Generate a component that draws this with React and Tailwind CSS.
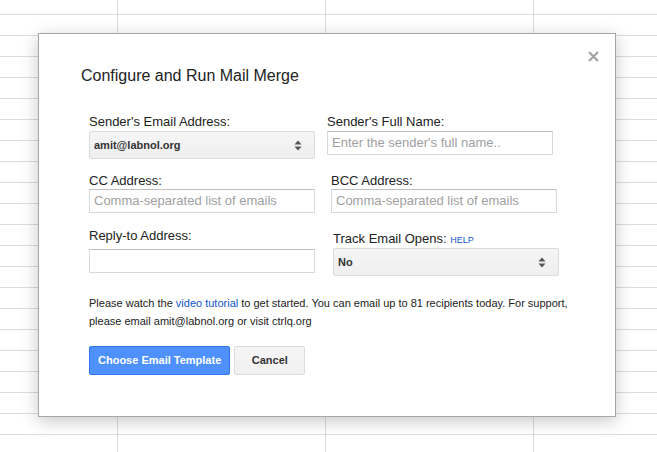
import React from "react";

const font = { fontFamily: '"Liberation Sans", Arial, sans-serif' };

function Arrows() {
  return (
    <svg width="8" height="11" viewBox="0 0 8 11" className="shrink-0">
      <path d="M4 0.5 L7.5 4.5 L0.5 4.5 Z" fill="#555" />
      <path d="M4 10.5 L7.5 6.5 L0.5 6.5 Z" fill="#555" />
    </svg>
  );
}

function Select({ value }) {
  return (
    <div className="mt-[2px] flex h-[28px] w-[226px] items-center justify-between rounded-[2px] border border-[#dcdcdc] bg-gradient-to-b from-[#f5f5f5] to-[#efefef] pl-[4px] pr-[12px] text-[11px] font-bold text-[#333]">
      <span>{value}</span>
      <Arrows />
    </div>
  );
}

function Input({ placeholder }) {
  return (
    <div className="flex h-[24px] w-[226px] items-center border border-[#d9d9d9] border-t-[#c0c0c0] bg-white pl-[4px] text-[13px] text-[#a0a0a0]">
      {placeholder}
    </div>
  );
}

function Label({ children }) {
  return <div className="h-[15px] text-[13px] leading-[15px] text-[#222]">{children}</div>;
}

export default function App() {
  return (
    <div
      className="h-[452px] w-[657px] overflow-hidden bg-white bg-[linear-gradient(to_right,#dcdcdc_1px,transparent_1px),linear-gradient(to_bottom,#dcdcdc_1px,transparent_1px)] bg-[size:208px_21px] bg-[position:117px_14px] pl-[38px] pt-[33px]"
      style={font}
    >
      <div className="relative h-[384px] w-[578px] border border-[#a6a6a6] bg-white pl-[42px] pt-[32px] shadow-[0_4px_16px_rgba(0,0,0,0.22)]">
        {/* close */}
        <svg
          width="11"
          height="11"
          viewBox="0 0 11 11"
          className="absolute right-[16px] top-[17px]"
        >
          <path d="M1 1 L10 10 M10 1 L1 10" stroke="#a3a3a3" strokeWidth="2.2" />
        </svg>

        <div className="h-[20px] text-[16px] leading-[20px] text-[#222]">
          Configure and Run Mail Merge
        </div>

        <div className="ml-[8px] mt-[28px]">
          <div className="flex items-start gap-[12px]">
            <div>
              <Label>Sender's Email Address:</Label>
              <Select value="amit@labnol.org" />
            </div>
            <div>
              <Label>Sender's Full Name:</Label>
              <div className="mt-[2px]">
                <Input placeholder="Enter the sender's full name.." />
              </div>
            </div>
          </div>

          <div className="mt-[14px] flex items-start gap-[16px]">
            <div>
              <Label>CC Address:</Label>
              <div className="mt-[1px]">
                <Input placeholder="Comma-separated list of emails" />
              </div>
            </div>
            <div>
              <Label>BCC Address:</Label>
              <div className="mt-[1px]">
                <Input placeholder="Comma-separated list of emails" />
              </div>
            </div>
          </div>

          <div className="mt-[15px] flex items-start gap-[18px]">
            <div>
              <Label>Reply-to Address:</Label>
              <div className="mt-[6px]">
                <Input placeholder="" />
              </div>
            </div>
            <div className="pt-[3px]">
              <Label>
                Track Email Opens:{" "}
                <span className="text-[9px] uppercase text-[#1155cc]">Help</span>
              </Label>
              <div className="mt-[2px]">
                <Select value="No" />
              </div>
            </div>
          </div>

          <p className="mt-[18px] w-[490px] text-[11px] leading-[18px] text-[#222]">
            Please watch the <span className="text-[#1155cc]">video tutorial</span> to get
            started. You can email up to 81 recipients today. For support, please email
            amit@labnol.org or visit ctrlq.org
          </p>

          <div className="mt-[16px] flex gap-[4px]">
            <button className="h-[29px] rounded-[2px] border border-[#3079ed] bg-[#4d90fe] px-[8px] text-[11px] font-bold text-white">
              Choose Email Template
            </button>
            <button className="h-[29px] w-[71px] rounded-[2px] border border-[#dcdcdc] bg-gradient-to-b from-[#f5f5f5] to-[#f1f1f1] text-[11px] font-bold text-[#333]">
              Cancel
            </button>
          </div>
        </div>
      </div>
    </div>
  );
}
